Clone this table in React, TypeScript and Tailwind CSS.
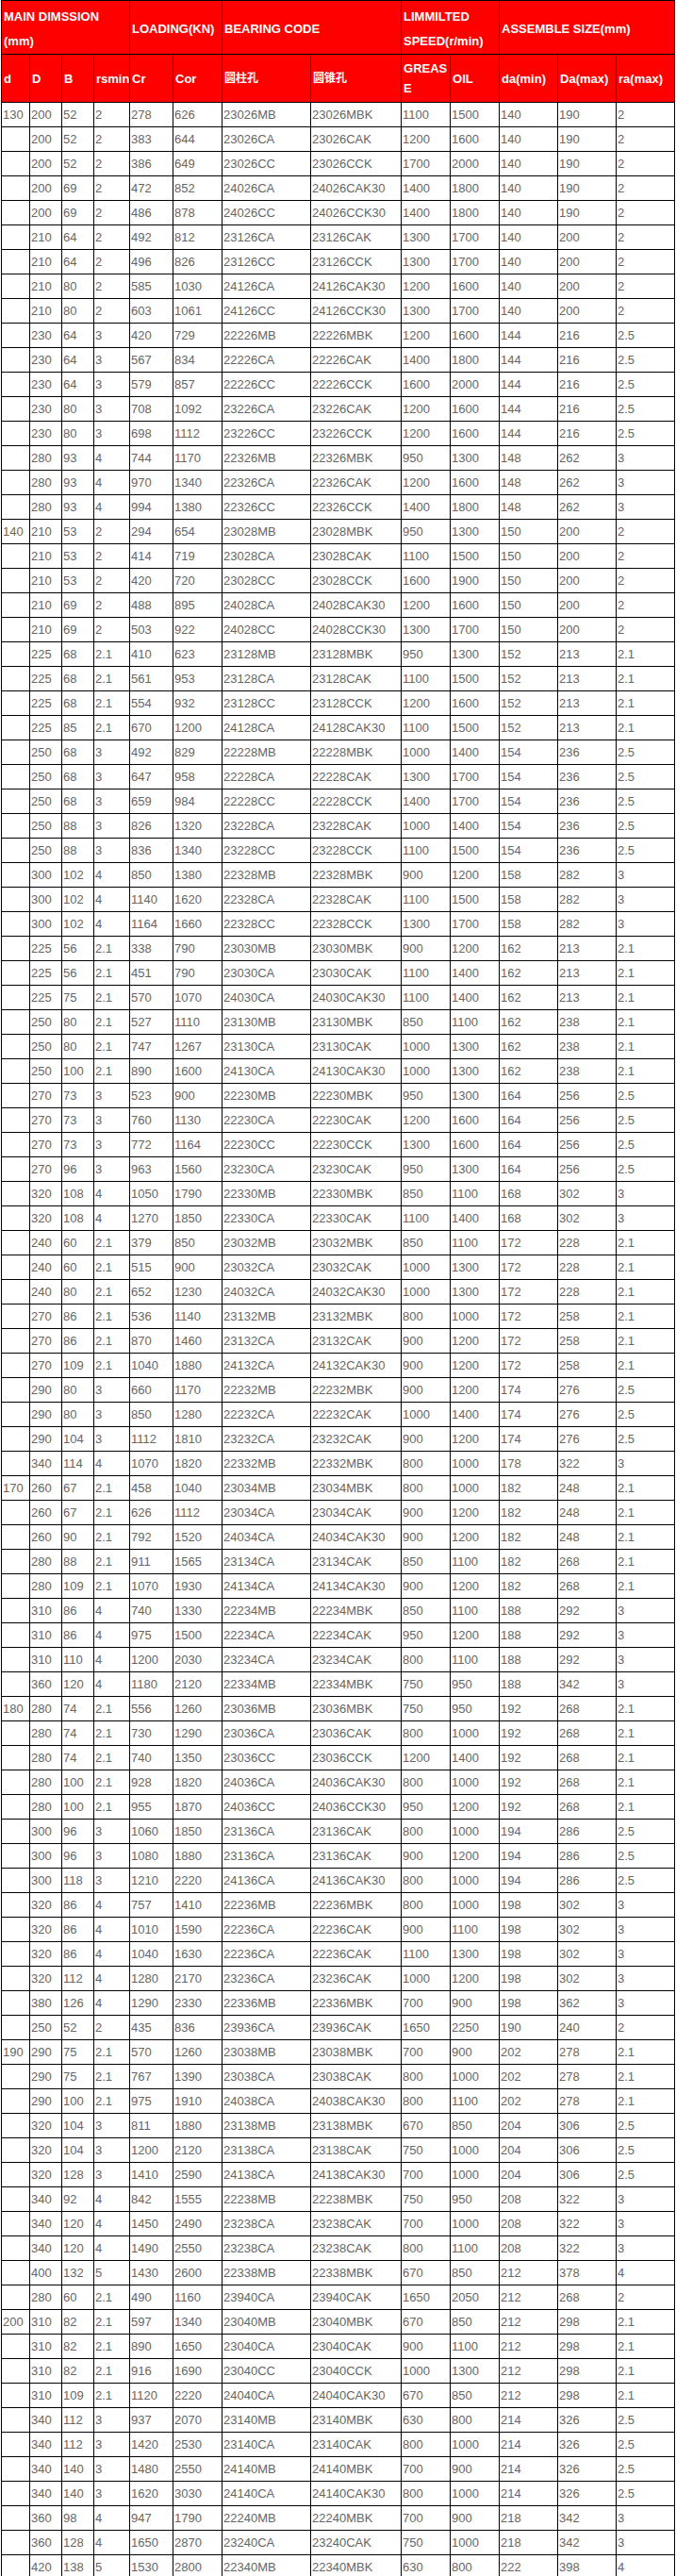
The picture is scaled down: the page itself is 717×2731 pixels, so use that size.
const groups: [string, string[]][] = [
  [
    "130",
    [
      "200 52 2 278 626 23026MB 23026MBK 1100 1500 140 190 2",
      "200 52 2 383 644 23026CA 23026CAK 1200 1600 140 190 2",
      "200 52 2 386 649 23026CC 23026CCK 1700 2000 140 190 2",
      "200 69 2 472 852 24026CA 24026CAK30 1400 1800 140 190 2",
      "200 69 2 486 878 24026CC 24026CCK30 1400 1800 140 190 2",
      "210 64 2 492 812 23126CA 23126CAK 1300 1700 140 200 2",
      "210 64 2 496 826 23126CC 23126CCK 1300 1700 140 200 2",
      "210 80 2 585 1030 24126CA 24126CAK30 1200 1600 140 200 2",
      "210 80 2 603 1061 24126CC 24126CCK30 1300 1700 140 200 2",
      "230 64 3 420 729 22226MB 22226MBK 1200 1600 144 216 2.5",
      "230 64 3 567 834 22226CA 22226CAK 1400 1800 144 216 2.5",
      "230 64 3 579 857 22226CC 22226CCK 1600 2000 144 216 2.5",
      "230 80 3 708 1092 23226CA 23226CAK 1200 1600 144 216 2.5",
      "230 80 3 698 1112 23226CC 23226CCK 1200 1600 144 216 2.5",
      "280 93 4 744 1170 22326MB 22326MBK 950 1300 148 262 3",
      "280 93 4 970 1340 22326CA 22326CAK 1200 1600 148 262 3",
      "280 93 4 994 1380 22326CC 22326CCK 1400 1800 148 262 3",
    ],
  ],
  [
    "140",
    [
      "210 53 2 294 654 23028MB 23028MBK 950 1300 150 200 2",
      "210 53 2 414 719 23028CA 23028CAK 1100 1500 150 200 2",
      "210 53 2 420 720 23028CC 23028CCK 1600 1900 150 200 2",
      "210 69 2 488 895 24028CA 24028CAK30 1200 1600 150 200 2",
      "210 69 2 503 922 24028CC 24028CCK30 1300 1700 150 200 2",
      "225 68 2.1 410 623 23128MB 23128MBK 950 1300 152 213 2.1",
      "225 68 2.1 561 953 23128CA 23128CAK 1100 1500 152 213 2.1",
      "225 68 2.1 554 932 23128CC 23128CCK 1200 1600 152 213 2.1",
      "225 85 2.1 670 1200 24128CA 24128CAK30 1100 1500 152 213 2.1",
      "250 68 3 492 829 22228MB 22228MBK 1000 1400 154 236 2.5",
      "250 68 3 647 958 22228CA 22228CAK 1300 1700 154 236 2.5",
      "250 68 3 659 984 22228CC 22228CCK 1400 1700 154 236 2.5",
      "250 88 3 826 1320 23228CA 23228CAK 1000 1400 154 236 2.5",
      "250 88 3 836 1340 23228CC 23228CCK 1100 1500 154 236 2.5",
      "300 102 4 850 1380 22328MB 22328MBK 900 1200 158 282 3",
      "300 102 4 1140 1620 22328CA 22328CAK 1100 1500 158 282 3",
      "300 102 4 1164 1660 22328CC 22328CCK 1300 1700 158 282 3",
    ],
  ],
  [
    "",
    [
      "225 56 2.1 338 790 23030MB 23030MBK 900 1200 162 213 2.1",
      "225 56 2.1 451 790 23030CA 23030CAK 1100 1400 162 213 2.1",
      "225 75 2.1 570 1070 24030CA 24030CAK30 1100 1400 162 213 2.1",
      "250 80 2.1 527 1110 23130MB 23130MBK 850 1100 162 238 2.1",
      "250 80 2.1 747 1267 23130CA 23130CAK 1000 1300 162 238 2.1",
      "250 100 2.1 890 1600 24130CA 24130CAK30 1000 1300 162 238 2.1",
      "270 73 3 523 900 22230MB 22230MBK 950 1300 164 256 2.5",
      "270 73 3 760 1130 22230CA 22230CAK 1200 1600 164 256 2.5",
      "270 73 3 772 1164 22230CC 22230CCK 1300 1600 164 256 2.5",
      "270 96 3 963 1560 23230CA 23230CAK 950 1300 164 256 2.5",
      "320 108 4 1050 1790 22330MB 22330MBK 850 1100 168 302 3",
      "320 108 4 1270 1850 22330CA 22330CAK 1100 1400 168 302 3",
    ],
  ],
  [
    "",
    [
      "240 60 2.1 379 850 23032MB 23032MBK 850 1100 172 228 2.1",
      "240 60 2.1 515 900 23032CA 23032CAK 1000 1300 172 228 2.1",
      "240 80 2.1 652 1230 24032CA 24032CAK30 1000 1300 172 228 2.1",
      "270 86 2.1 536 1140 23132MB 23132MBK 800 1000 172 258 2.1",
      "270 86 2.1 870 1460 23132CA 23132CAK 900 1200 172 258 2.1",
      "270 109 2.1 1040 1880 24132CA 24132CAK30 900 1200 172 258 2.1",
      "290 80 3 660 1170 22232MB 22232MBK 900 1200 174 276 2.5",
      "290 80 3 850 1280 22232CA 22232CAK 1000 1400 174 276 2.5",
      "290 104 3 1112 1810 23232CA 23232CAK 900 1200 174 276 2.5",
      "340 114 4 1070 1820 22332MB 22332MBK 800 1000 178 322 3",
    ],
  ],
  [
    "170",
    [
      "260 67 2.1 458 1040 23034MB 23034MBK 800 1000 182 248 2.1",
      "260 67 2.1 626 1112 23034CA 23034CAK 900 1200 182 248 2.1",
      "260 90 2.1 792 1520 24034CA 24034CAK30 900 1200 182 248 2.1",
      "280 88 2.1 911 1565 23134CA 23134CAK 850 1100 182 268 2.1",
      "280 109 2.1 1070 1930 24134CA 24134CAK30 900 1200 182 268 2.1",
      "310 86 4 740 1330 22234MB 22234MBK 850 1100 188 292 3",
      "310 86 4 975 1500 22234CA 22234CAK 950 1200 188 292 3",
      "310 110 4 1200 2030 23234CA 23234CAK 800 1100 188 292 3",
      "360 120 4 1180 2120 22334MB 22334MBK 750 950 188 342 3",
    ],
  ],
  [
    "180",
    [
      "280 74 2.1 556 1260 23036MB 23036MBK 750 950 192 268 2.1",
      "280 74 2.1 730 1290 23036CA 23036CAK 800 1000 192 268 2.1",
      "280 74 2.1 740 1350 23036CC 23036CCK 1200 1400 192 268 2.1",
      "280 100 2.1 928 1820 24036CA 24036CAK30 800 1000 192 268 2.1",
      "280 100 2.1 955 1870 24036CC 24036CCK30 950 1200 192 268 2.1",
      "300 96 3 1060 1850 23136CA 23136CAK 800 1000 194 286 2.5",
      "300 96 3 1080 1880 23136CA 23136CAK 900 1200 194 286 2.5",
      "300 118 3 1210 2220 24136CA 24136CAK30 800 1000 194 286 2.5",
      "320 86 4 757 1410 22236MB 22236MBK 800 1000 198 302 3",
      "320 86 4 1010 1590 22236CA 22236CAK 900 1100 198 302 3",
      "320 86 4 1040 1630 22236CA 22236CAK 1100 1300 198 302 3",
      "320 112 4 1280 2170 23236CA 23236CAK 1000 1200 198 302 3",
      "380 126 4 1290 2330 22336MB 22336MBK 700 900 198 362 3",
      "250 52 2 435 836 23936CA 23936CAK 1650 2250 190 240 2",
    ],
  ],
  [
    "190",
    [
      "290 75 2.1 570 1260 23038MB 23038MBK 700 900 202 278 2.1",
      "290 75 2.1 767 1390 23038CA 23038CAK 800 1000 202 278 2.1",
      "290 100 2.1 975 1910 24038CA 24038CAK30 800 1100 202 278 2.1",
      "320 104 3 811 1880 23138MB 23138MBK 670 850 204 306 2.5",
      "320 104 3 1200 2120 23138CA 23138CAK 750 1000 204 306 2.5",
      "320 128 3 1410 2590 24138CA 24138CAK30 700 1000 204 306 2.5",
      "340 92 4 842 1555 22238MB 22238MBK 750 950 208 322 3",
      "340 120 4 1450 2490 23238CA 23238CAK 700 1000 208 322 3",
      "340 120 4 1490 2550 23238CA 23238CAK 800 1100 208 322 3",
      "400 132 5 1430 2600 22338MB 22338MBK 670 850 212 378 4",
      "280 60 2.1 490 1160 23940CA 23940CAK 1650 2050 212 268 2",
    ],
  ],
  [
    "200",
    [
      "310 82 2.1 597 1340 23040MB 23040MBK 670 850 212 298 2.1",
      "310 82 2.1 890 1650 23040CA 23040CAK 900 1100 212 298 2.1",
      "310 82 2.1 916 1690 23040CC 23040CCK 1000 1300 212 298 2.1",
      "310 109 2.1 1120 2220 24040CA 24040CAK30 670 850 212 298 2.1",
      "340 112 3 937 2070 23140MB 23140MBK 630 800 214 326 2.5",
      "340 112 3 1420 2530 23140CA 23140CAK 800 1000 214 326 2.5",
      "340 140 3 1480 2550 24140MB 24140MBK 700 900 214 326 2.5",
      "340 140 3 1620 3030 24140CA 24140CAK30 800 1000 214 326 2.5",
      "360 98 4 947 1790 22240MB 22240MBK 700 900 218 342 3",
      "360 128 4 1650 2870 23240CA 23240CAK 750 1000 218 342 3",
      "420 138 5 1530 2800 22340MB 22340MBK 630 800 222 398 4",
    ],
  ],
];

const rows = groups.flatMap(([d, list]) =>
  list.map((line, i) => [i === 0 ? d : "", ...line.split(" ")])
);

const th =
  "border border-black bg-[#ff0000] px-[2px] text-left align-middle font-bold text-white";
const td = "h-[26px] border border-black px-[1px] text-left align-middle text-[#666]";

export default function App() {
  return (
    <div className="bg-white">
      <table className="ml-[1px] w-[714px] table-fixed border-collapse font-['Liberation_Sans','Noto_Sans_CJK_SC',Arial,sans-serif] text-[13px]">
        <colgroup>
          <col className="w-[30px]" />
          <col className="w-[34px]" />
          <col className="w-[34px]" />
          <col className="w-[38px]" />
          <col className="w-[46px]" />
          <col className="w-[52px]" />
          <col className="w-[94px]" />
          <col className="w-[96px]" />
          <col className="w-[52px]" />
          <col className="w-[52px]" />
          <col className="w-[62px]" />
          <col className="w-[62px]" />
          <col className="w-[62px]" />
        </colgroup>
        <thead>
          <tr>
            <th colSpan={4} className={`${th} h-[53px] pt-[4px] leading-[26px]`}>
              MAIN DIMSSION
              <br />
              (mm)
            </th>
            <th colSpan={2} className={`${th} h-[53px] pt-[4px] leading-[26px]`}>
              LOADING(KN)
            </th>
            <th colSpan={2} className={`${th} h-[53px] pt-[4px] leading-[26px]`}>
              BEARING CODE
            </th>
            <th colSpan={2} className={`${th} h-[53px] pt-[4px] leading-[26px]`}>
              LIMMILTED
              <br />
              SPEED(r/min)
            </th>
            <th colSpan={3} className={`${th} h-[53px] pt-[4px] leading-[26px]`}>
              ASSEMBLE SIZE(mm)
            </th>
          </tr>
          <tr>
            <th className={`${th} h-[51px] pt-[2px]`}>d</th>
            <th className={`${th} pt-[2px]`}>D</th>
            <th className={`${th} pt-[2px]`}>B</th>
            <th className={`${th} pt-[2px]`}>rsmin</th>
            <th className={`${th} pt-[2px]`}>Cr</th>
            <th className={`${th} pt-[2px]`}>Cor</th>
            <th className={`${th} text-[12px]`}>圆柱孔</th>
            <th className={`${th} text-[12px]`}>圆锥孔</th>
            <th className={`${th} leading-[21px]`}>
              GREAS
              <br />E
            </th>
            <th className={`${th} pt-[2px]`}>OIL</th>
            <th className={`${th} pt-[2px]`}>da(min)</th>
            <th className={`${th} pt-[2px]`}>Da(max)</th>
            <th className={`${th} pt-[2px]`}>ra(max)</th>
          </tr>
        </thead>
        <tbody>
          {rows.map((r, i) => (
            <tr key={i}>
              {r.map((v, j) => (
                <td key={j} className={td}>
                  {v}
                </td>
              ))}
            </tr>
          ))}
        </tbody>
      </table>
    </div>
  );
}
